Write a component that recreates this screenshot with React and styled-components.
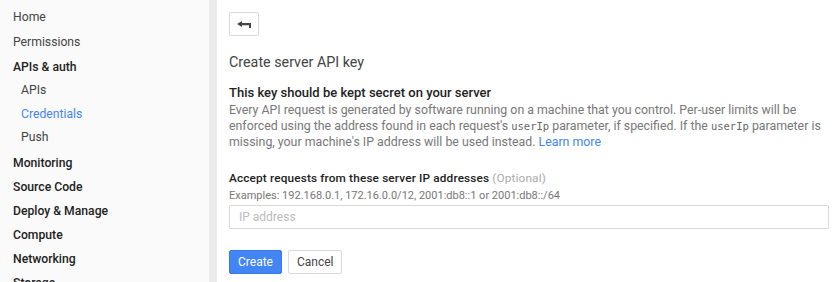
import React from 'react';
import styled, { createGlobalStyle } from 'styled-components';

const Global = createGlobalStyle`
   body {
      margin: 0;
      font-family: Roboto, "Liberation Sans", Arial, sans-serif;
      font-size: 13px;
      color: #222;
      background: #fff;
   }
`

const navItems = [
   { label: 'Home' },
   { label: 'Permissions' },
   { label: 'APIs & auth', section: true },
   { label: 'APIs', sub: true },
   { label: 'Credentials', sub: true, active: true },
   { label: 'Push', sub: true },
   { label: 'Monitoring', section: true },
   { label: 'Source Code', section: true },
   { label: 'Deploy & Manage', section: true },
   { label: 'Compute', section: true },
   { label: 'Networking', section: true },
   { label: 'Storage', section: true },
]

function BackIcon() {
   return (
      <svg width="14" height="7" viewBox="0 0 14 7">
         <path d="M0 3 L5 0 L5 2 L14 2 L14 7 L12 7 L12 4.3 L5 4.3 L5 6 Z" fill="#444" />
      </svg>
   )
}

function App() {
   return (
      <Page>
         <Global />
         <Sidebar>
            {navItems.map((item) => (
               <NavItem key={item.label} $section={item.section} $sub={item.sub} $active={item.active}>
                  {item.label}
               </NavItem>
            ))}
         </Sidebar>
         <Divider />
         <Main>
            <BackButton>
               <BackIcon />
            </BackButton>
            <Title>Create server API key</Title>
            <Heading>This key should be kept secret on your server</Heading>
            <Para>
               Every API request is generated by software running on a machine that you control. Per-user limits will be
               enforced using the address found in each request's <Code>userIp</Code> parameter, if specified. If the <Code>userIp</Code> parameter is
               missing, your machine's IP address will be used instead. <Link href="#">Learn more</Link>
            </Para>
            <Label>
               Accept requests from these server IP addresses <Optional>(Optional)</Optional>
            </Label>
            <Hint>Examples: 192.168.0.1, 172.16.0.0/12, 2001:db8::1 or 2001:db8::/64</Hint>
            <Input placeholder="IP address" />
            <Actions>
               <Button $primary>Create</Button>
               <Button>Cancel</Button>
            </Actions>
         </Main>
      </Page>
   )
}

export default App

const Page = styled.div`
   display: flex;
   height: 282px;
   overflow: hidden;
`

const Sidebar = styled.nav`
   width: 209px;
   flex-shrink: 0;
   background: #fafafa;
   padding-top: 5px;
   box-sizing: border-box;
`

const NavItem = styled.div`
   height: ${(p) => (p.$sub ? '23.5px' : '24px')};
   line-height: ${(p) => (p.$sub ? '23.5px' : '24px')};
   padding-left: ${(p) => (p.$sub ? '21px' : '13px')};
   font-size: 12.2px;
   font-weight: ${(p) => (p.$section ? 500 : 400)};
   color: ${(p) => (p.$active ? '#4285f4' : p.$section ? '#222' : '#444')};
   white-space: nowrap;
   &:nth-child(2),
   &:nth-child(3),
   &:nth-child(7) {
      margin-top: 1px;
   }
`

const Divider = styled.div`
   width: 8px;
   flex-shrink: 0;
   background: #ebebeb;
`

const Main = styled.main`
   flex: 1;
   padding: 12px 9px 0 12px;
   display: flex;
   flex-direction: column;
   align-items: flex-start;
`

const BackButton = styled.button`
   width: 30px;
   height: 24px;
   display: flex;
   align-items: center;
   justify-content: center;
   background: #fff;
   border: 1px solid #d9d9d9;
   border-radius: 2px;
   padding: 0;
   cursor: pointer;
`

const Title = styled.h1`
   font-size: 14.3px;
   font-weight: 400;
   color: #444;
   margin: 16px 0 0;
   line-height: 20px;
`

const Heading = styled.h2`
   font-size: 13px;
   font-weight: 500;
   color: #222;
   margin: 13px 0 0;
   line-height: 16px;
`

const Para = styled.p`
   margin: 1px 0 0;
   font-size: 12.35px;
   line-height: 16px;
   color: #777;
`

const Code = styled.code`
   font-family: "DejaVu Sans Mono", "Liberation Mono", monospace;
   font-size: 10.5px;
   color: #666;
`

const Link = styled.a`
   color: #4285f4;
   text-decoration: none;
`

const Label = styled.div`
   margin-top: 20px;
   font-size: 11.8px;
   letter-spacing: 0.15px;
   font-weight: 500;
   color: #222;
   line-height: 16px;
`

const Optional = styled.span`
   font-weight: 400;
   color: #aaa;
`

const Hint = styled.div`
   margin-top: 2px;
   font-size: 11px;
   color: #777;
   line-height: 15px;
`

const Input = styled.input`
   box-sizing: border-box;
   width: 100%;
   height: 24px;
   margin-top: 2px;
   border: 1px solid #d9d9d9;
   border-radius: 1px;
   padding: 0 9px;
   font: inherit;
   font-size: 12px;
   &::placeholder {
      color: #bbb;
   }
`

const Actions = styled.div`
   display: flex;
   gap: 6px;
   margin-top: 21px;
`

const Button = styled.button`
   height: 24px;
   padding: 0 8px;
   font: inherit;
   font-size: 12px;
   border-radius: 2px;
   cursor: pointer;
   background: ${(p) => (p.$primary ? '#4285f4' : '#fff')};
   color: ${(p) => (p.$primary ? '#fff' : '#444')};
   border: 1px solid ${(p) => (p.$primary ? '#3b78e7' : '#d9d9d9')};
`
